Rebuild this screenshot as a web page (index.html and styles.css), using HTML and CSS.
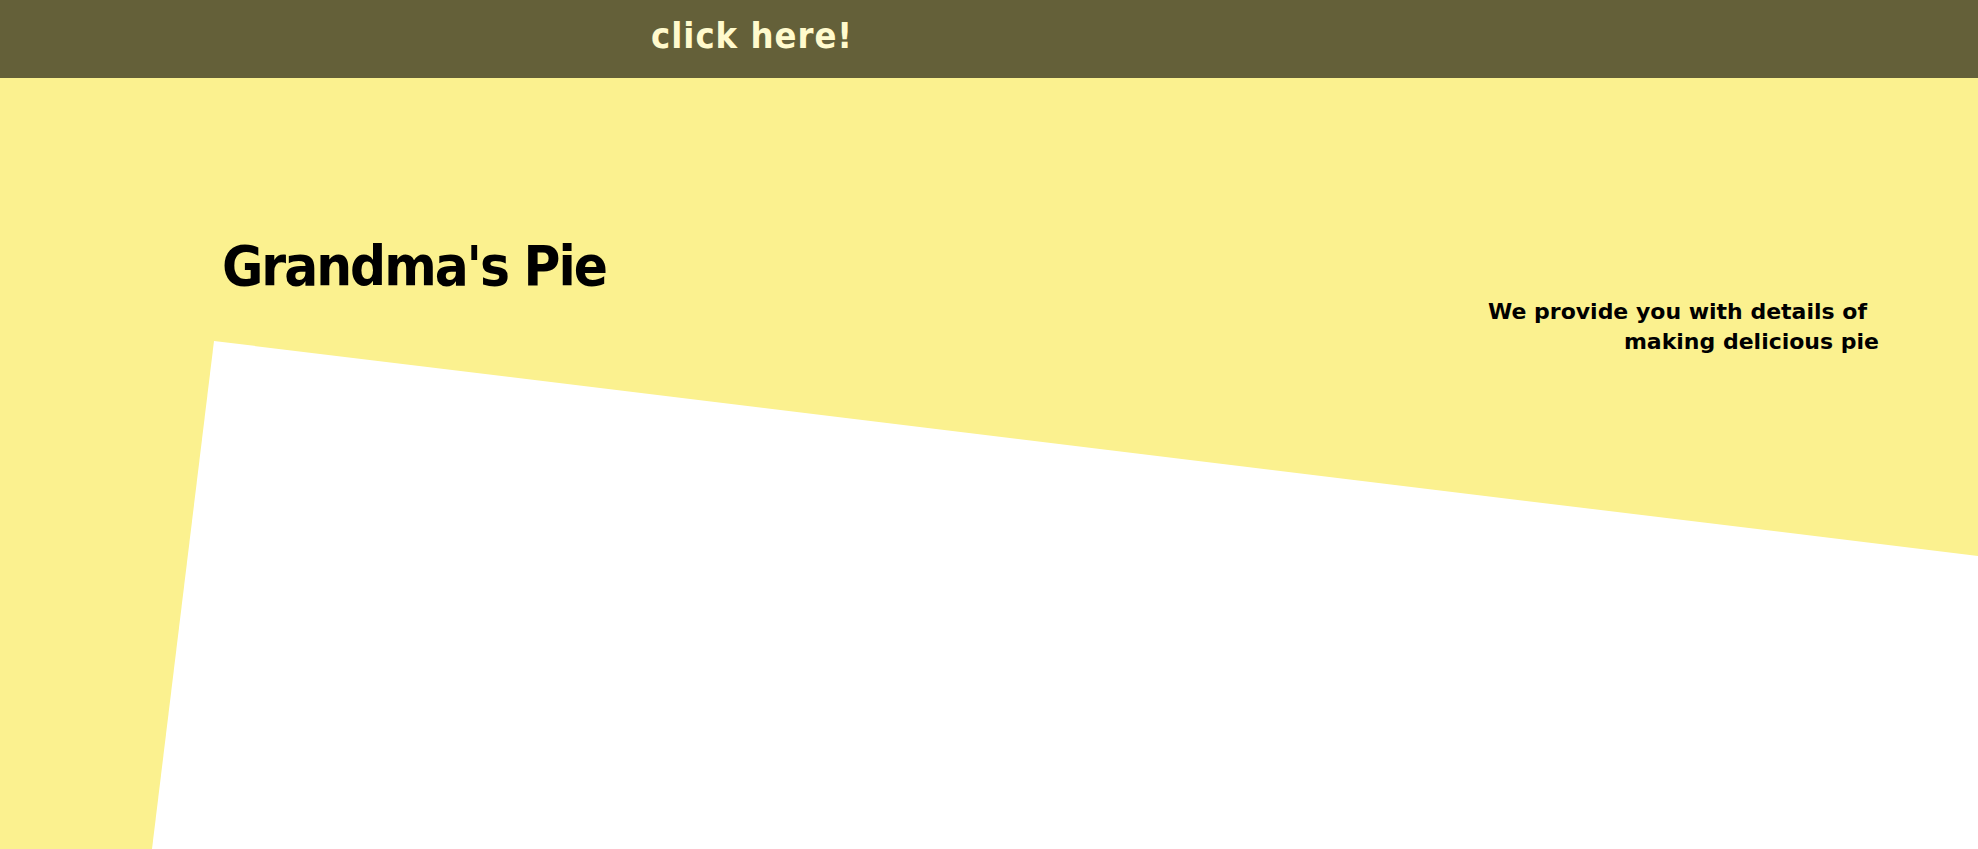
FILE: index.html
```html
<!DOCTYPE html>
<html lang="en">
<head>
<meta charset="utf-8">
<title>Grandma's Pie</title>
<link rel="stylesheet" href="styles.css">
</head>
<body>
<header class="topbar">
  <a class="topbar-link" href="#">click here!</a>
</header>
<main class="hero">
  <div class="hero-sheet"></div>
  <div class="hero-row">
    <h1 class="hero-title">Grandma's Pie</h1>
    <p class="hero-tagline"><span class="hero-tagline-first">We provide you with details of</span><br>making delicious pie</p>
  </div>
</main>
</body>
</html>
```

FILE: styles.css
```css
html, body {
  margin: 0;
  padding: 0;
}

body {
  font-family: "DejaVu Sans Condensed", "DejaVu Sans", sans-serif;
  font-weight: bold;
  background: #fbf18f;
  overflow: hidden;
}

.topbar {
  height: 78px;
  box-sizing: border-box;
  background: #646039;
  padding: 18px 0 0 651px;
}

.topbar-link {
  display: inline-block;
  color: #fffacd;
  text-decoration: none;
  font-size: 36px;
  line-height: 1;
  letter-spacing: 1px;
}

.hero {
  position: relative;
  height: 771px;
  background: #fbf18f;
}

.hero-sheet {
  position: absolute;
  inset: 0;
  background: #ffffff;
  clip-path: polygon(214px 263px, 100% 478px, 100% 100%, 152px 100%);
}

.hero-row {
  position: relative;
  display: flex;
  justify-content: space-between;
  align-items: flex-start;
  padding: 160px 99px 0 222px;
}

.hero-title {
  margin: 0;
  font-size: 56px;
  line-height: 1;
  letter-spacing: -2px;
  color: #000;
}

.hero-tagline {
  margin: 59px 0 0 0;
  font-family: "DejaVu Sans", sans-serif;
  font-size: 22px;
  line-height: 30px;
  text-align: right;
  color: #000;
}

.hero-tagline-first {
  padding-right: 12px;
}
```
